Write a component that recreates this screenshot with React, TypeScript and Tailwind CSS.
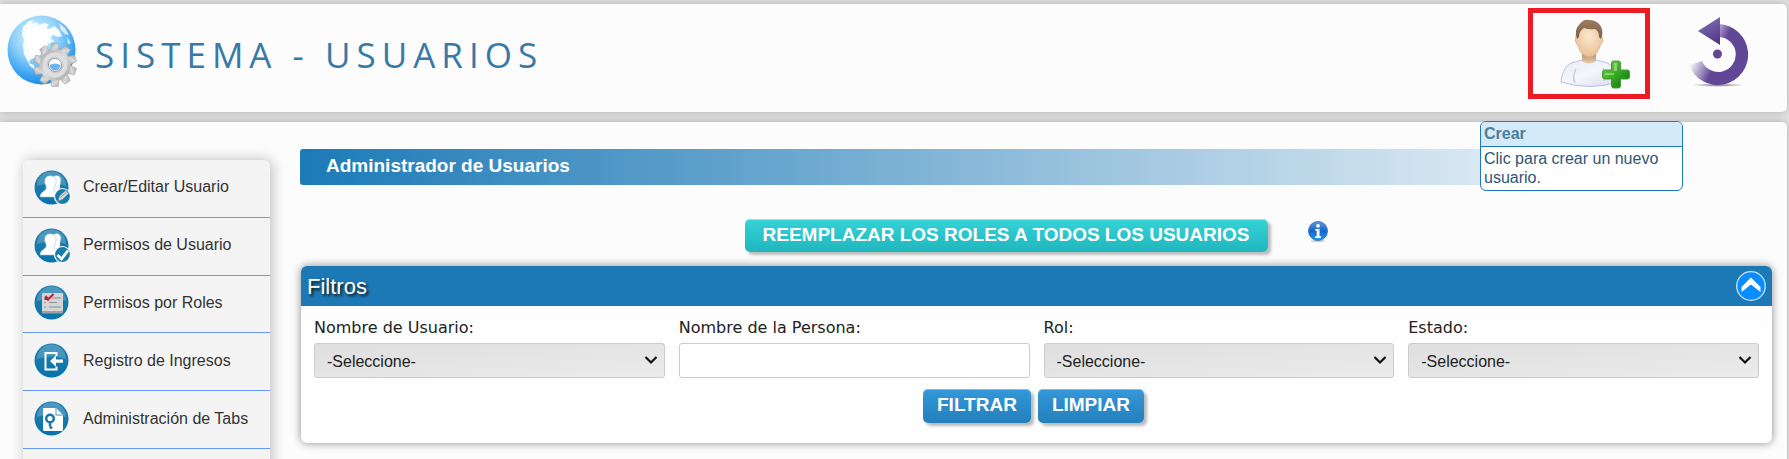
import { useId } from "react";
import type { ReactNode } from "react";

const GlobeLogo = () => (
  <svg viewBox="0 0 70 72" className="h-[72px] w-[70px] shrink-0" aria-hidden="true">
    <defs>
      <radialGradient id="globe" cx="0.42" cy="0.3" r="0.72">
        <stop offset="0" stopColor="#e2f6ff" />
        <stop offset="0.45" stopColor="#93d2fa" />
        <stop offset="0.8" stopColor="#3ba3f5" />
        <stop offset="1" stopColor="#1f86e4" />
      </radialGradient>
      <linearGradient id="gear" x1="0" y1="0" x2="1" y2="1">
        <stop offset="0" stopColor="#a9a9a9" />
        <stop offset="0.5" stopColor="#dcdcdc" />
        <stop offset="1" stopColor="#a2a2a2" />
      </linearGradient>
    </defs>
    <ellipse cx="34.5" cy="35" rx="34" ry="34.5" fill="url(#globe)" />
    <path
      d="M16 12l6-6 5-1-3 4 5-2 3 3 6-2 4 2-3 3 4 1 4-3 5 4 3 6-4 1-5-2-3 3 4 3-6 3-3 5-4 4-2 5 3 4-4-1-4-3-3 1-2 4 5 2 1 5-5-4-3-6-3-6-1-8 1-6-2-5z"
      fill="#fff"
      fillOpacity="0.92"
    />
    <path d="M20 16h18l4 8-6 7-6 4-2 8-5-6-4-10z" fill="#fff" fillOpacity="0.85" />
    <path d="M52 8l6 5 4 7-4-1-4-4zM60 22l4 6-3 1z" fill="#fff" fillOpacity="0.7" />
    <g transform="translate(48 50)">
      <g fill="url(#gear)" stroke="#a6a6a6" strokeWidth="0.6">
        {[0, 36, 72, 108, 144, 180, 216, 252, 288, 324].map((deg) => (
          <path key={deg} d="M-4.500-13l1.200-8.500h6.600l1.200 8.500z" transform={`rotate(${deg})`} />
        ))}
        <circle r="15.500" strokeWidth="0" />
      </g>
      <circle r="10.500" fill="none" stroke="#dedede" strokeWidth="4" />
      <circle r="6.500" fill="#fff" stroke="#a0a0a0" strokeWidth="1" />
      <path d="M-5.500 0a5.500 5.500 0 0 0 11 0q-5.500-3-11 0z" fill="#6bb6ee" />
    </g>
  </svg>
);

const AddUserIcon = () => (
  <svg viewBox="0 0 70 70" className="size-[70px]" aria-hidden="true">
    <defs>
      <linearGradient id="shirt" x1="0" y1="0" x2="1" y2="1">
        <stop offset="0" stopColor="#e9ebf6" />
        <stop offset="0.5" stopColor="#f5f6fc" />
        <stop offset="1" stopColor="#d5dbee" />
      </linearGradient>
      <radialGradient id="face" cx="0.5" cy="0.4" r="0.6">
        <stop offset="0" stopColor="#fde8d0" />
        <stop offset="1" stopColor="#e9bf95" />
      </radialGradient>
      <linearGradient id="hair" x1="0" y1="0" x2="0" y2="1">
        <stop offset="0" stopColor="#9a7b5c" />
        <stop offset="1" stopColor="#7d6048" />
      </linearGradient>
      <linearGradient id="neck" x1="0" y1="0" x2="0" y2="1">
        <stop offset="0" stopColor="#a5805c" />
        <stop offset="1" stopColor="#e8cdb2" />
      </linearGradient>
      <linearGradient id="plus" x1="0" y1="0" x2="1" y2="1">
        <stop offset="0" stopColor="#7fd356" />
        <stop offset="0.5" stopColor="#34a822" />
        <stop offset="1" stopColor="#0d6f09" />
      </linearGradient>
    </defs>
    <path
      d="M1 63c1-10 5-19 14-20l7-2h14l8 2c9 2 13 10 14 20q-28 9-57 0z"
      fill="url(#shirt)"
      stroke="#b9c1dc"
      strokeWidth="1"
    />
    <path d="M15 64q-3-7 1-14M44 62q2-6-1-13" fill="none" stroke="#c5cce4" strokeWidth="1.500" />
    <path d="M22 32h14v10q-7 5-14 0z" fill="url(#neck)" />
    <path
      d="M16 17q0-13 13-13t13 13l1 5-3 5c-2 7-6 11-11 11s-9-4-11-11l-3-5z"
      fill="url(#face)"
      stroke="#d2a67d"
      strokeWidth="0.6"
    />
    <path
      d="M17 20q-3-9 2-14Q23 0 29 1q7 0 11 5 4 6 1 14l-2-2q0-6-4-8-6 1-11-1-5 3-5 9z"
      fill="url(#hair)"
    />
    <path
      d="M53.500 42h5q2 0 2 2v7h7q2 0 2 2v5q0 2-2 2h-7v7q0 2-2 2h-5q-2 0-2-2v-7h-7q-2 0-2-2v-5q0-2 2-2h7v-7q0-2 2-2z"
      fill="url(#plus)"
      stroke="#4a9a3a"
      strokeWidth="1"
    />
    <path d="M54 52v-8h3v8zM45 54h9v2h-9z" fill="#c8f5a8" fillOpacity="0.5" />
  </svg>
);

const BackIcon = () => (
  <svg viewBox="0 0 60 70" className="h-[70px] w-[60px]" aria-hidden="true">
    <defs>
      <linearGradient id="tail" x1="0" y1="0.75" x2="0.32" y2="0.9">
        <stop offset="0" stopColor="#624796" stopOpacity="0.05" />
        <stop offset="1" stopColor="#624796" />
      </linearGradient>
      <linearGradient id="head" x1="0.3" y1="0" x2="0.7" y2="1">
        <stop offset="0" stopColor="#8271b5" />
        <stop offset="1" stopColor="#543588" />
      </linearGradient>
      <radialGradient id="ground">
        <stop offset="0" stopColor="#777" />
        <stop offset="1" stopColor="#777" stopOpacity="0" />
      </radialGradient>
    </defs>
    <ellipse cx="29" cy="68" rx="26" ry="2" fill="url(#ground)" />
    <path
      d="M30 7a30.500 30.500 0 1 1-30 41l13-4a17.500 17.500 0 1 0 17-24z"
      fill="url(#tail)"
    />
    <path d="M9 14L31 0v28z" fill="url(#head)" />
    <circle cx="28.500" cy="37" r="4.500" fill="#624796" />
  </svg>
);

const InfoIcon = () => (
  <svg viewBox="0 0 20 21" className="h-[21px] w-5" aria-hidden="true">
    <defs>
      <linearGradient id="info" x1="0" y1="0" x2="0" y2="1">
        <stop offset="0" stopColor="#5b9ade" />
        <stop offset="0.5" stopColor="#1766c8" />
        <stop offset="1" stopColor="#1c9bff" />
      </linearGradient>
    </defs>
    <ellipse cx="10" cy="20" rx="7" ry="1" fill="#ccc" />
    <circle cx="10" cy="10" r="9.500" fill="url(#info)" stroke="#2a68b5" strokeWidth="0.8" />
    <circle cx="10" cy="4.800" r="1.900" fill="#fff" />
    <path d="M7.300 8h4.200v7.200h1.500V17H7.200v-1.800h1.500V9.800H7.300z" fill="#fff" />
  </svg>
);

const CollapseIcon = () => (
  <svg viewBox="0 0 30 30" className="size-[30px]" aria-hidden="true">
    <circle cx="15" cy="15" r="14.300" fill="#0a8cff" stroke="#c9e4fb" strokeWidth="1.300" />
    <path d="M5.500 16L15 6.500l9.500 9.500v5L15 13.500 5.500 21z" fill="#fff" />
  </svg>
);

const Disc = ({ children }: { children: ReactNode }) => {
  const id = useId();
  return (
    <svg viewBox="0 0 37 35" className="h-[35px] w-[37px] shrink-0" aria-hidden="true">
      <defs>
        <linearGradient id={id} x1="0" y1="0" x2="0" y2="1">
          <stop offset="0" stopColor="#2380b0" />
          <stop offset="0.500" stopColor="#1878ab" />
          <stop offset="1" stopColor="#0674ac" />
        </linearGradient>
      </defs>
      <circle cx="17.500" cy="17.500" r="17" fill={`url(#${id})`} />
      <path d="M3 16a14.500 14.500 0 0 1 29 0q-14-5-29 0z" fill="#fff" fillOpacity="0.2" />
      {children}
    </svg>
  );
};

const People = () => (
  <>
    <path
      d="M20 6q6-2 7 4l-1 5 0 4q6 2 5 7l-9 2-5-6z"
      fill="#fff"
      stroke="#7fb5d2"
      strokeWidth="0.6"
    />
    <path
      d="M11 9q2-4 7-3 5 1 4 7l-1 3q-1 3-1 5 3 2 2 6H6q0-4 4-6 3-2 2-5-2-3-1-7z"
      fill="#fff"
      stroke="#9cc6dc"
      strokeWidth="0.6"
    />
    <circle cx="28.500" cy="26.500" r="8" fill="#177caf" stroke="#fff" strokeWidth="1.200" />
  </>
);

const menu = [
  {
    label: "Crear/Editar Usuario",
    icon: (
      <Disc>
        <People />
        <path d="M24 31l1.500-5 6-5.500 3 3-6 6z" fill="#d8dde0" stroke="#7b8c95" strokeWidth="0.800" />
        <path d="M26.500 27.500l5.500-5" stroke="#8b979d" />
      </Disc>
    ),
  },
  {
    label: "Permisos de Usuario",
    icon: (
      <Disc>
        <People />
        <path d="M23.500 27l4 4 6.500-8.500" fill="none" stroke="#fff" strokeWidth="2.800" />
      </Disc>
    ),
  },
  {
    label: "Permisos por Roles",
    icon: (
      <Disc>
        <rect x="8" y="8" width="21" height="20" rx="1" fill="#d3d5d6" />
        <rect x="8" y="26" width="21" height="2.500" fill="#9aa2a6" />
        <path d="M18 13h9M15 17.500h8M15 22h12" stroke="#8c8f91" strokeWidth="1.200" />
        <path d="M10 17.500h2M10 22h2" stroke="#aaa" strokeWidth="1.500" />
        <path d="M10.500 12h3v3h-3z" fill="#46557a" />
        <path d="M11.500 11l2.500 3.500L19.500 9" fill="none" stroke="#c4272f" strokeWidth="2.200" />
      </Disc>
    ),
  },
  {
    label: "Registro de Ingresos",
    icon: (
      <Disc>
        <path d="M22.500 13v-3h-11v16.500h11v-3" fill="none" stroke="#fff" strokeWidth="2" />
        <path d="M16 18l6-5.500v4h7v3.200h-7v4z" fill="#fff" />
      </Disc>
    ),
  },
  {
    label: "Administración de Tabs",
    icon: (
      <Disc>
        <path d="M9 7h13l7 7v14.500q0 1.500-1.500 1.500h-17Q9 30 9 28.500z" fill="#fff" />
        <path d="M22 7v7h7" fill="none" stroke="#7fb5d2" strokeWidth="1.300" />
        <circle cx="16" cy="17.500" r="3.800" fill="none" stroke="#1577aa" strokeWidth="2.500" />
        <path d="M16 21v4.500" stroke="#1577aa" strokeWidth="2.500" />
        <circle cx="17" cy="26.500" r="1.500" fill="#1577aa" />
      </Disc>
    ),
  },
];

const fieldClass =
  "h-[35px] w-full rounded-[3px] border border-[#ccc] px-3 pt-0.5 text-[16px] text-[#222]";

const labelClass =
  "block h-[31px] pt-1.5 text-[16px] leading-5 text-[#222] [font-family:'DejaVu_Sans',Verdana,sans-serif]";

const SelectField = ({ id, label }: { id: string; label: string }) => (
  <div>
    <label htmlFor={id} className={labelClass}>
      {label}
    </label>
    <div className="relative">
      <select
        id={id}
        className={`${fieldClass} appearance-none bg-linear-to-br from-[#dfdfdf] to-[#ebebeb]`}
      >
        <option>-Seleccione-</option>
      </select>
      <svg
        viewBox="0 0 14 10"
        className="pointer-events-none absolute top-3 right-[7px] h-2.5 w-3.5"
        aria-hidden="true"
      >
        <path d="M1.500 2L7 7.500 12.500 2" fill="none" stroke="#111" strokeWidth="2.200" />
      </svg>
    </div>
  </div>
);

const ActionButton = ({ children }: { children: ReactNode }) => (
  <button
    type="button"
    className="h-[34px] rounded-[5px] bg-linear-to-b from-[#3498db] to-[#2380ba] px-3.5 pb-0.5 text-[19px] leading-7 font-bold text-white shadow-[inset_0_1px_0_#7fbfea,3px_3px_3px_#bbb]"
  >
    {children}
  </button>
);

export default function App() {
  return (
    <div className="flex h-screen flex-col gap-2.5 overflow-hidden bg-[#e4e4e4] pt-1 pr-0.5 [font-family:'Liberation_Sans',Arial,sans-serif]">
      <header className="flex h-[108px] shrink-0 items-start rounded-r-[5px] bg-[#fcfcfc] pl-[7px] shadow-[0_0_8px_#aaa]">
        <div className="flex items-center gap-[18px] pt-[11px]">
          <GlobeLogo />
          <h1 className="pt-2 text-[35px] leading-10 tracking-[6px] text-[#3879a8] [font-family:'Open_Sans',sans-serif]">
            SISTEMA - USUARIOS
          </h1>
        </div>
        <div className="ml-auto flex items-start gap-[39px] pt-1 pr-[38px]">
          <div className="relative">
            <button
              type="button"
              aria-label="Crear"
              aria-describedby="crear-tip"
              className="flex h-[91px] w-[122px] items-center justify-center border-5 border-[#ed1c24] pl-3"
            >
              <AddUserIcon />
            </button>
            <div
              id="crear-tip"
              role="tooltip"
              className="absolute top-[113px] -left-12 z-10 w-[203px] overflow-hidden rounded-[6px] border border-[#1c78c0] bg-white text-[16px] text-[#2f5673]"
            >
              <p className="border-b border-[#1c78c0] bg-[#d5eaf8] px-[3px] leading-6 font-bold text-[#4b7f9f]">
                Crear
              </p>
              <p className="px-[3px] pt-0.5 pb-[3px] leading-[19px]">
                Clic para crear un nuevo usuario.
              </p>
            </div>
          </div>
          <button type="button" aria-label="Volver" className="pt-[9px]">
            <BackIcon />
          </button>
        </div>
      </header>

      <div className="flex grow items-start rounded-tr-[5px] bg-[#fcfcfc] pr-[15px] pl-[23px] shadow-[0_0_8px_#aaa]">
        <nav className="mt-[38px] w-[247px] shrink-0 rounded-[6px] bg-[#f4f4f4] pb-14 shadow-[2px_0_14px_#bbb]">
          <ul className="grid h-[289px] grid-rows-5">
            {menu.map(({ label, icon }) => (
              <li key={label} className="border-b border-[#6699ff]">
                <a
                  href="#"
                  className="flex h-full items-center gap-3 pb-0.5 pl-[11px] text-[16px] text-[#333]"
                >
                  {icon}
                  {label}
                </a>
              </li>
            ))}
          </ul>
        </nav>

        <main className="ml-[30px] grow pt-[27px]">
          <h2 className="h-9 w-[95%] rounded-[3px] bg-linear-to-r/srgb from-[#1c7ab7] to-[#fcfcfc] pl-[26px] text-[19px] leading-[34px] font-bold text-white">
            Administrador de Usuarios
          </h2>

          <div className="flex items-start justify-center gap-10 pt-[34px]">
            <button
              type="button"
              className="h-[33px] rounded-[5px] bg-linear-to-b from-[#35d3d9] to-[#20b6bd] px-[18px] pb-0.5 text-[19px] leading-7 font-bold text-white shadow-[inset_0_1px_0_#8ae6ea,3px_3px_3px_#bbb]"
            >
              REEMPLAZAR LOS ROLES A TODOS LOS USUARIOS
            </button>
            <button type="button" aria-label="Información" className="pt-0.5">
              <InfoIcon />
            </button>
          </div>

          <section className="mt-3.5 ml-px overflow-hidden rounded-[6px] bg-[#fefefe] shadow-[0_0_9px_#888]">
            <div className="flex h-10 items-center justify-between bg-[#1d79b6] pr-1.5 pl-1.5">
              <h3 className="text-[22px] text-white [text-shadow:2px_2px_3px_#111]">Filtros</h3>
              <button type="button" aria-label="Contraer filtros">
                <CollapseIcon />
              </button>
            </div>
            <form className="px-[13px] pt-1.5">
              <div className="grid grid-cols-4 gap-3.5">
                <SelectField id="usuario" label="Nombre de Usuario:" />
                <div>
                  <label htmlFor="persona" className={labelClass}>
                    Nombre de la Persona:
                  </label>
                  <input id="persona" type="text" className={`${fieldClass} bg-white`} />
                </div>
                <SelectField id="rol" label="Rol:" />
                <SelectField id="estado" label="Estado:" />
              </div>
              <div className="flex justify-center gap-[7px] pt-[11px] pr-1.5 pb-5">
                <ActionButton>FILTRAR</ActionButton>
                <ActionButton>LIMPIAR</ActionButton>
              </div>
            </form>
          </section>
        </main>
      </div>
    </div>
  );
}
